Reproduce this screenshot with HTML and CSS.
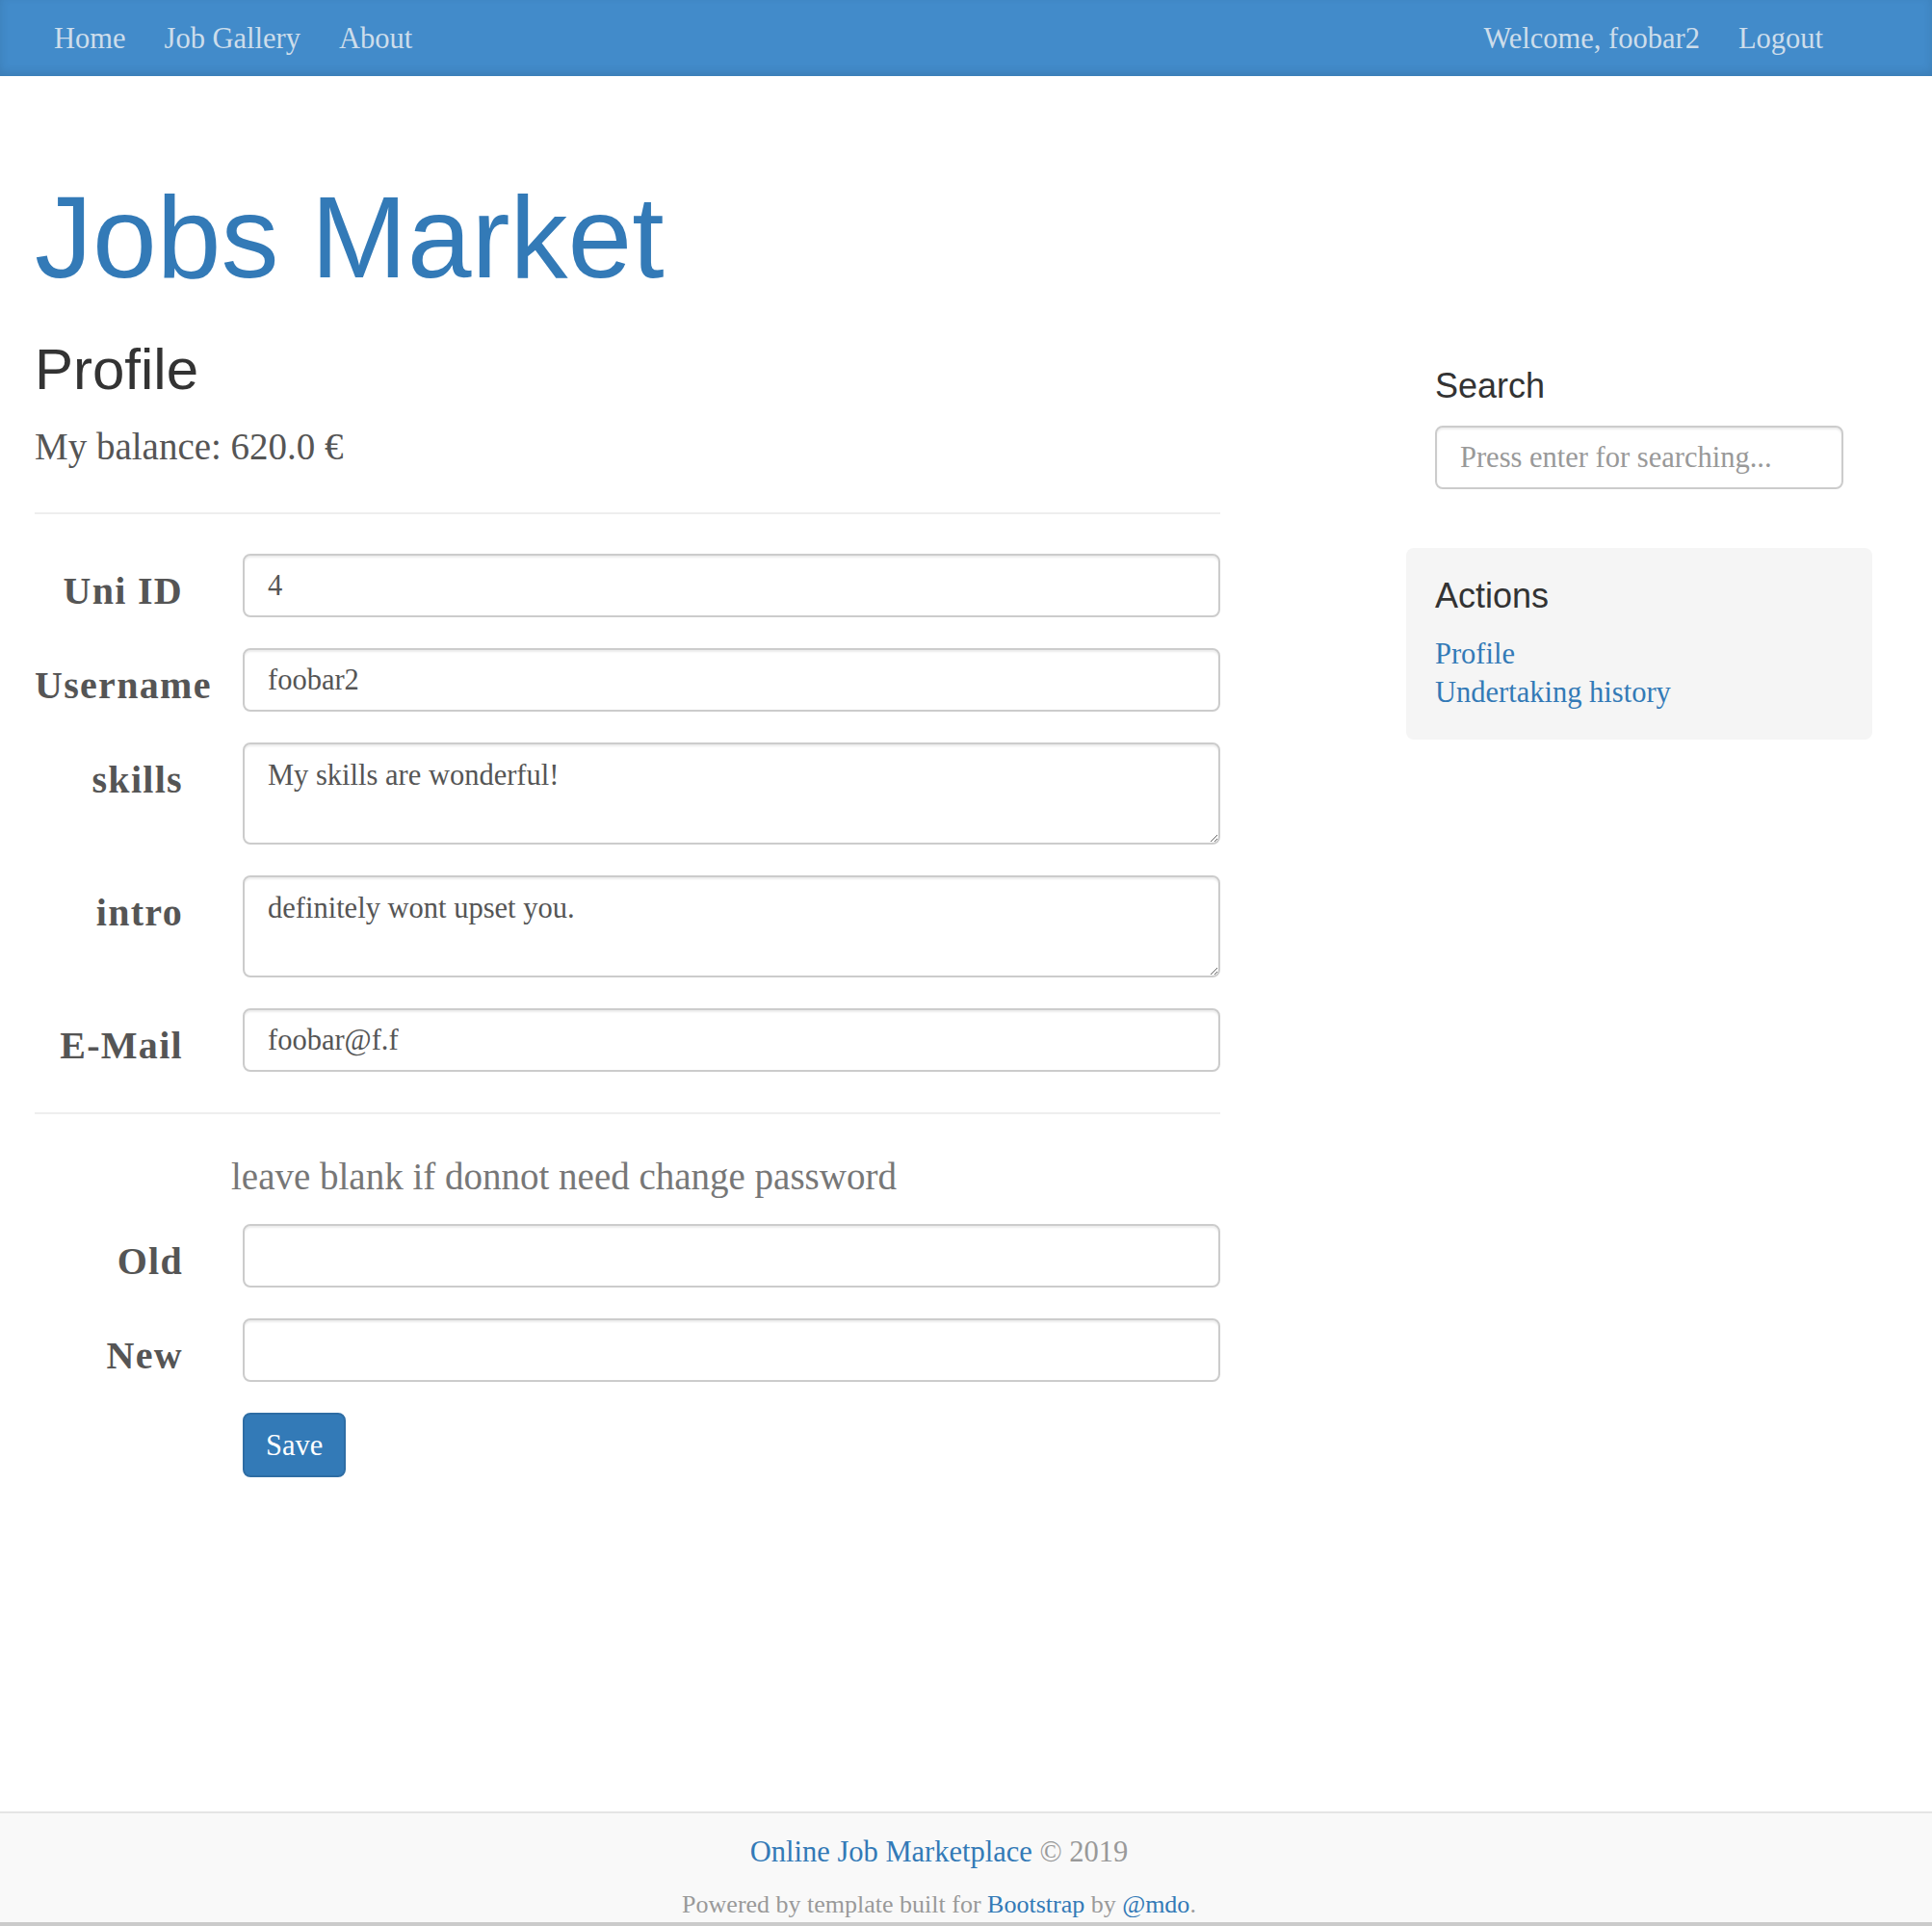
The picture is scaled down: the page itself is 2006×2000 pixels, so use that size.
FILE: index.html
```html
<!DOCTYPE html>
<html lang="en">
<head>
<meta charset="utf-8">
<title>Jobs Market - Profile</title>
<link rel="stylesheet" href="styles.css">
</head>
<body>
<div class="masthead">
  <div class="container">
    <nav class="nav">
      <a class="nav-item" href="#">Home</a>
      <a class="nav-item" href="#">Job Gallery</a>
      <a class="nav-item" href="#">About</a>
      <div class="nav-right">
        <a class="nav-item" href="#">Welcome, foobar2</a>
        <a class="nav-item" href="#">Logout</a>
      </div>
    </nav>
  </div>
</div>

<div class="container">
  <header class="header">
    <h1 class="title">Jobs Market</h1>
  </header>

  <div class="row">
    <main class="main">
      <h2 class="page-title">Profile</h2>
      <p class="balance">My balance: 620.0 €</p>
      <hr class="rule rule-first">
      <form class="form">
        <div class="group">
          <label class="label">Uni ID</label>
          <input class="field" type="text" value="4">
        </div>
        <div class="group">
          <label class="label">Username</label>
          <input class="field" type="text" value="foobar2">
        </div>
        <div class="group">
          <label class="label">skills</label>
          <textarea class="field area">My skills are wonderful!</textarea>
        </div>
        <div class="group">
          <label class="label">intro</label>
          <textarea class="field area">definitely wont upset you.</textarea>
        </div>
        <div class="group">
          <label class="label">E-Mail</label>
          <input class="field" type="text" value="foobar@f.f">
        </div>
        <hr class="rule rule-second">
        <p class="note">leave blank if donnot need change password</p>
        <div class="group group-old">
          <label class="label">Old</label>
          <input class="field" type="password">
        </div>
        <div class="group">
          <label class="label">New</label>
          <input class="field" type="password">
        </div>
        <div class="group group-last">
          <span class="label"></span>
          <button class="btn" type="button">Save</button>
        </div>
      </form>
    </main>

    <aside class="sidebar">
      <div class="module">
        <h4 class="module-title">Search</h4>
        <input class="field search" type="text" placeholder="Press enter for searching...">
      </div>
      <div class="module-inset">
        <h4 class="module-title">Actions</h4>
        <ol class="links">
          <li><a href="#">Profile</a></li>
          <li><a href="#">Undertaking history</a></li>
        </ol>
      </div>
    </aside>
  </div>
</div>

<footer class="footer">
  <div class="footer-inner">
    <p class="footer-line"><a href="#">Online Job Marketplace</a> © 2019</p>
    <p class="footer-small">Powered by template built for <a href="#">Bootstrap</a> by <a href="#">@mdo</a>.</p>
  </div>
</footer>
<div class="bottom-bar"></div>
</body>
</html>
```

FILE: styles.css
```css
* { box-sizing: border-box; }

html, body {
  margin: 0;
  padding: 0;
  background: #fff;
}

body {
  font-family: "Liberation Serif", "Times New Roman", serif;
  font-size: 30.5px;
  color: #555;
  overflow: hidden;
}

a { color: #337ab7; text-decoration: none; }

.container {
  width: 1937px;
  margin-left: 6px;
  padding: 0 30px;
}

/* Navbar */
.masthead {
  background-color: #428bca;
  height: 79px;
  box-shadow: inset 0 -4px 10px rgba(0, 0, 0, 0.1);
}

.nav {
  display: flex;
  align-items: flex-start;
}

.nav-right {
  margin-left: auto;
  display: flex;
}

.nav-item {
  display: block;
  padding: 20px 20px 19px;
  line-height: 40px;
  font-size: 30.5px;
  color: #cdddeb;
}

/* Header */
.header {
  padding-top: 101px;
}

.title {
  margin: 0;
  font-family: "Liberation Sans", Arial, sans-serif;
  font-weight: normal;
  font-size: 120px;
  line-height: 132px;
  color: #337ab7;
}

/* Layout */
.row {
  display: flex;
  align-items: flex-start;
}

.main {
  width: 1231px;
  flex: none;
}

.sidebar {
  width: 424px;
  flex: none;
  margin-left: 223px;
  padding-top: 69px;
}

.page-title {
  margin: 39px 0 0;
  font-family: "Liberation Sans", Arial, sans-serif;
  font-weight: normal;
  font-size: 60px;
  line-height: 66px;
  color: #333;
}

.balance {
  margin: 19px 0 0;
  font-size: 39px;
  line-height: 56px;
  color: #555;
}

.rule {
  border: 0;
  border-top: 2px solid #eee;
  margin: 0;
  height: 0;
}

.rule-first { margin-top: 40px; }
.rule-second { margin-top: 10px; }

/* Form */
.form {
  margin-top: 41px;
  display: flex;
  flex-direction: column;
}

.group {
  display: flex;
  align-items: flex-start;
  margin-bottom: 32px;
}

.group-old { margin-top: 21px; }
.group-last { margin-bottom: 0; }

.label {
  display: block;
  width: 154px;
  height: 66px;
  flex: none;
  margin-right: 62px;
  padding-top: 11px;
  text-align: right;
  white-space: nowrap;
  font-weight: bold;
  font-size: 40px;
  line-height: 55px;
  letter-spacing: 1.3px;
  color: #555;
}

.field {
  display: block;
  width: 1015px;
  height: 66px;
  padding: 12px 24px;
  border: 2px solid #ccc;
  border-radius: 8px;
  background: #fff;
  box-shadow: inset 0 2px 2px rgba(0, 0, 0, 0.075);
  font-family: "Liberation Serif", "Times New Roman", serif;
  font-size: 30.5px;
  color: #555;
  outline: none;
}

.field::placeholder { color: #999; }

.area {
  height: 106px;
  line-height: 40px;
  padding-top: 12px;
  resize: both;
}

.note {
  margin: 37px 0 0 204px;
  font-size: 39px;
  line-height: 56px;
  color: #777;
}

.btn {
  height: 67px;
  padding: 0 22px;
  border: 2px solid #2e6da4;
  border-radius: 8px;
  background: #337ab7;
  color: #fff;
  font-family: "Liberation Serif", "Times New Roman", serif;
  font-size: 30.5px;
  line-height: 40px;
}

/* Sidebar */
.module-title {
  margin: 0;
  font-family: "Liberation Sans", Arial, sans-serif;
  font-weight: normal;
  font-size: 36px;
  line-height: 40px;
  color: #333;
}

.search {
  width: 424px;
  margin-top: 21px;
}

.module-inset {
  margin: 61px -30px 0;
  padding: 30px 30px 29px;
  background: #f5f5f5;
  border-radius: 8px;
}

.links {
  list-style: none;
  margin: 20px 0 0;
  padding: 0;
  line-height: 40px;
  font-size: 30.5px;
}

/* Footer */
.footer {
  margin-top: 347px;
  height: 115px;
  overflow: hidden;
  background: #f9f9f9;
  border-top: 2px solid #e5e5e5;
  color: #999;
}

.footer-inner {
  width: 1950px;
  text-align: center;
  padding-top: 20px;
}

.footer-line {
  margin: 0;
  font-size: 30.5px;
  line-height: 40px;
}

.footer-small {
  margin: 15px 0 0;
  font-size: 26px;
  line-height: 40px;
}

.bottom-bar {
  height: 20px;
  background: #cbcbcb;
}
```
